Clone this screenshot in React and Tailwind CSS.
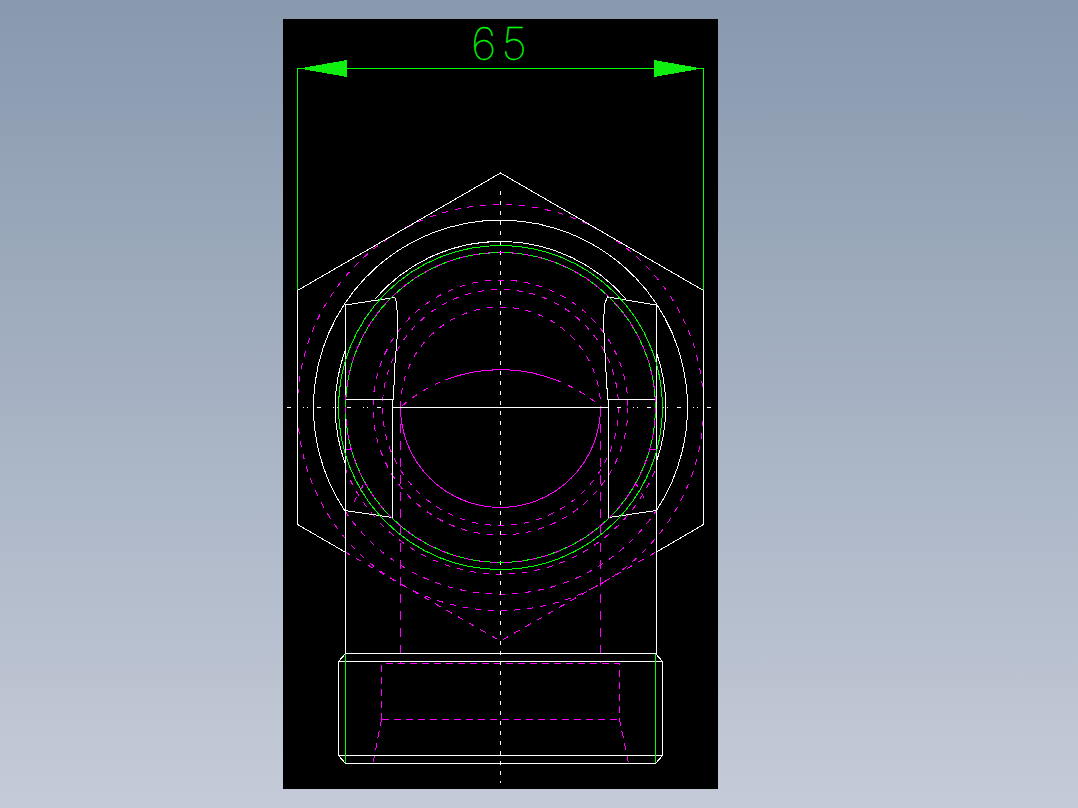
const WHITE = '#ffffff'
const GREEN = '#00ff00'
const PINK = '#ff00ff'

// hidden lines, page coordinates (the svg viewBox starts at the panel corner)
const dashedCircles = [203, 127.5, 118]
const dashedArcs = [
  // r100 upper half
  'M400.5 407 A100 100 0 0 1 600.5 407',
  // r166 and r187 lower arcs between the body edges
  'M345 468 A167 167 0 0 0 656 468',
  'M345 511 A187 187 0 0 0 656 511',
  // hex bottom
  'M345 552 L500.5 641 L656 552',
  // small crosses by the flats
  'M354 502 L365 482',
  'M635 482 L647 503',
]
const dashedLines = [
  // thread box
  'M381.5 719.5 V663.5 H619.5 V719.5',
  'M381.5 719.5 H619.5',
  'M381.5 719.5 L373 763',
  'M619.5 719.5 L628.5 763',
]

const whitePaths = [
  // hexagon, broken where the body cuts it
  'M345 552 L297.5 524.5 V290.5 L500.5 173 L703.5 290.5 V524.5 L656.5 552',
  // outer ring
  'M345 511 A187 187 0 1 1 656 511',
  // inner ring pieces
  'M375 299 A165.6 165.6 0 0 1 626 299',
  'M345 351 A165.6 165.6 0 0 0 345 463',
  'M656 351 A165.6 165.6 0 0 1 656 463',
  // left flat
  'M345 305 L394.7 297.5 L396.5 302 L397.5 317 L397.5 333 L394.7 367 L393.5 399.5 H345',
  'M392.5 399.5 V517.5 L345 510.5',
  // right flat
  'M656.5 305 L607.5 297 L605 303 L603.5 320 L604 333 L605.7 367 L607.7 399.5 H656.5',
  'M608.5 399.5 V517.5 L656.5 510.5',
  // body
  'M345.5 305 V654',
  'M656.5 305 V654',
  // section line
  'M392.5 407.5 H608.5',
  // nut
  'M345.5 653.5 H655.5 L662.5 661.5 V755.5 L655.5 763.5 H345.5 L338.5 755.5 V661.5 Z',
  'M338.5 661.5 H662.5',
  'M338.5 755.5 H662.5',
]

function Drawing() {
  return (
    <svg viewBox="283 19 435 770" className="block w-full h-full" shapeRendering="crispEdges">
      <g fill="none" stroke={PINK} strokeWidth="1">
        {/* cap arc: dashed at the ends, solid over the middle */}
        <path d="M402 406 A154 154 0 0 1 445 380" strokeDasharray="6 7" />
        <path d="M445 380 A154 154 0 0 1 556 380" />
        <path d="M556 380 A154 154 0 0 1 600 406" strokeDasharray="6 7" />
        <path d="M400.5 407.5 A100 100 0 0 0 600.5 407.5" />
        <path d="M345 449.5 H351" />
        <path d="M650 449.5 H656.5" />
        <path d="M400.5 407 V663" strokeDasharray="9 8" />
        <path d="M600.5 407 V663" strokeDasharray="9 8" />
        {dashedCircles.map((r) => (
          <circle key={r} cx="500.5" cy="407.5" r={r} strokeDasharray="6 7" />
        ))}
        {dashedArcs.map((d) => (
          <path key={d} d={d} strokeDasharray="6 7" />
        ))}
        {dashedLines.map((d) => (
          <path key={d} d={d} strokeDasharray="7 5" />
        ))}
      </g>

      <g fill="none" stroke={WHITE} strokeWidth="1">
        {whitePaths.map((d) => (
          <path key={d} d={d} />
        ))}
        <path d="M287 407.5 H714" strokeDasharray="4 12 1 3 1 9" />
        <path d="M500.5 191 V783" strokeDasharray="4 6" />
      </g>

      <g fill="none" stroke={GREEN} strokeWidth="1">
        <circle cx="500.5" cy="407.5" r="162" />
        <circle cx="500.5" cy="407.5" r="155" />
        <path d="M297.5 290 V68.5 H703.5 V290" />
        <path d="M345.5 654 V763" />
        <path d="M655.5 654 V763" />
      </g>
      <circle cx="500.5" cy="407.5" r="155" fill="none" stroke={PINK} strokeDasharray="6 7" />

      <polygon points="299,68.5 347,60 347,77" fill="#10f010" />
      <polygon points="702,68.5 654,60 654,77" fill="#10f010" />
    </svg>
  )
}

export default function App() {
  return (
    <div className="h-[808px] w-full pl-[283px] pt-[19px] bg-gradient-to-b from-[#8899ae] to-[#c5cbd8] overflow-hidden">
      <div className="relative w-[435px] h-[770px] bg-black">
        <Drawing />
        <span className="absolute left-[188px] top-[2px] text-[45px] leading-[45px] tracking-[5px] font-thin text-[#00ff00] font-['Inter',sans-serif] [-webkit-text-stroke:0.3px_#00ff00]">
          65
        </span>
      </div>
    </div>
  )
}
